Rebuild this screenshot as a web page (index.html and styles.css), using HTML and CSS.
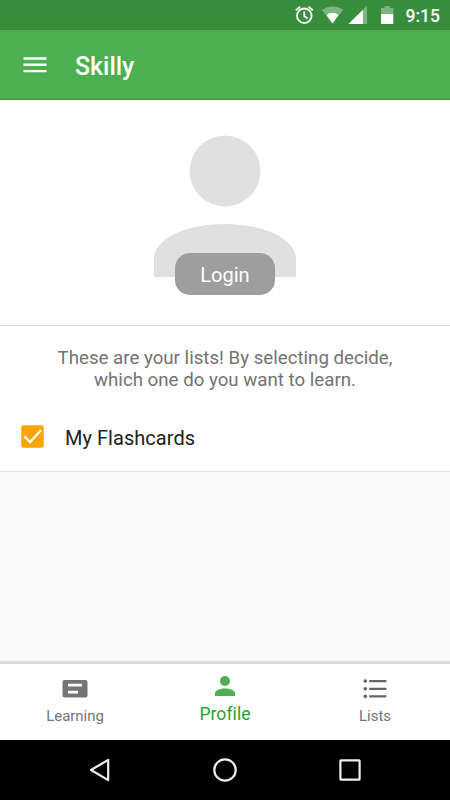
FILE: index.html
```
<!DOCTYPE html>
<html lang="en">
<head>
<meta charset="utf-8">
<title>Skilly</title>
<link rel="stylesheet" href="styles.css">
</head>
<body>
<div class="screen">
  <div class="status">
    <svg class="status-icons" width="120" height="30" viewBox="280 0 120 30" fill="#fff">
      <g fill="none" stroke="#fff" stroke-width="1.8">
        <circle cx="304.3" cy="15.8" r="7.3"/>
        <path d="M295.8 10.3l4.3-3.6M312.8 10.3l-4.3-3.6M304.3 11.3v4.9l3.5 2.2"/>
      </g>
      <path opacity=".35" d="M321.8 9.8Q332.5 2.8 343.2 9.8L332.5 23.6z"/>
      <path d="M326.4 15.1Q332.5 10.4 338.6 15.1L332.5 23.6z"/>
      <path opacity=".35" d="M348.5 24L367 5.7V24z"/>
      <path d="M348.5 24L363 9.7V24z"/>
      <path opacity=".35" d="M381 8h3.5V6h5.5v2h3.3v6H381z"/>
      <path d="M381 14h12.3v10H381z"/>
    </svg>
    <span class="clock">9:15</span>
  </div>
  <header class="appbar">
    <svg width="24" height="18" viewBox="0 0 24 18" fill="#fff"><path d="M.5 1.3h23v2.5H.5zM.5 7.6h23v2.5H.5zM.5 13.9h23v2.4H.5z"/></svg>
    <h1 class="title">Skilly</h1>
  </header>
  <section class="account">
    <svg class="avatar" width="142" height="142" viewBox="0 0 142 142" fill="#e0e0e0">
      <circle cx="71" cy="36" r="35.5"/>
      <path d="M0 142v-18C0 104 32 89 71 89s71 15 71 35v18z"/>
    </svg>
    <button class="login">Login</button>
  </section>
  <section class="lists">
    <p class="message">These are your lists! By selecting decide,<br>which one do you want to learn.</p>
    <div class="row">
      <svg width="23" height="23" viewBox="0 0 23 23"><rect x=".2" y=".2" width="22.6" height="22.6" rx="2" fill="#ffa505"/><path d="M3.3 11.2l5.8 5.8L19.9 5.3" fill="none" stroke="#fff" stroke-width="2.3"/></svg>
      <span class="list-name">My Flashcards</span>
    </div>
  </section>
  <main class="space"></main>
  <nav class="tabs">
    <div class="tab">
      <svg width="26" height="20" viewBox="0 0 26 20"><rect x=".5" y="1" width="25" height="17.6" rx="2" fill="#757575"/><path d="M6 4.8h14v2.7H6zM6 11.8h10v2.7H6z" fill="#fff"/></svg>
      <span class="label">Learning</span>
    </div>
    <div class="tab active">
      <svg width="20" height="20" viewBox="0 0 20 20" fill="#4caf50"><circle cx="10" cy="5" r="5"/><path d="M0 20v-2.5C0 14.2 5 12.5 10 12.5s10 1.7 10 5V20z"/></svg>
      <span class="label">Profile</span>
    </div>
    <div class="tab">
      <svg width="24" height="20" viewBox="0 0 24 20" fill="#666"><circle cx="2.3" cy="2.1" r="1.8"/><circle cx="2.3" cy="9.8" r="1.8"/><circle cx="2.3" cy="17.4" r="1.8"/><path d="M6.2 1h17.2v2.3H6.2zM6.2 8.7h17.2V11H6.2zM6.2 16.2h17.2v2.3H6.2z"/></svg>
      <span class="label">Lists</span>
    </div>
  </nav>
  <footer class="system">
    <svg width="26" height="26" viewBox="0 0 26 26"><path d="M4 13L21.2 2.9v20.2z"/></svg>
    <svg width="26" height="26" viewBox="0 0 26 26"><circle cx="13" cy="13" r="10.7"/></svg>
    <svg width="26" height="26" viewBox="0 0 26 26"><rect x="3.4" y="3.4" width="19.2" height="19.2" rx=".5"/></svg>
  </footer>
</div>
</body>
</html>
```
FILE: styles.css
```
* { box-sizing: border-box; }
body { margin: 0; font-family: Roboto, sans-serif; }
svg { display: block; flex: none; }
.screen { width: 450px; height: 800px; display: flex; flex-direction: column; background: #fafafa; overflow: hidden; }
.status { height: 30px; flex: none; display: flex; align-items: center; padding-left: 280px; background: #388e3c; color: #fff; }
.clock { font-size: 17.5px; font-weight: 500; line-height: 20px; margin: 2px 0 0 5.5px; }
.appbar { height: 70px; flex: none; display: flex; align-items: center; gap: 28px; padding-left: 23px; background: #4caf50; border-bottom: 1px solid #2f9e3b; }
.title { margin: 5px 0 0; font-size: 25px; font-weight: 500; line-height: 30px; letter-spacing: -.05px; color: #fff; }
.account { height: 226px; flex: none; display: flex; flex-direction: column; align-items: center; padding-top: 35px; background: #fff; border-bottom: 1px solid #e0e0e0; }
.login { position: relative; width: 100px; height: 42px; margin-top: -24px; padding: 2px 0 0; border: 0; border-radius: 15px; background: #9e9e9e; color: #fff; font: 20px Roboto, sans-serif; }
.lists { height: 146px; flex: none; padding-top: 21px; background: #fff; border-bottom: 1px solid #e4e4e4; }
.message { margin: 0; font-size: 18.7px; line-height: 22px; text-align: center; color: #737373; }
.row { display: flex; align-items: center; gap: 21px; margin-top: 34px; padding-left: 21px; height: 24px; }
.row svg { margin-top: -1px; }
.list-name { font-size: 20px; line-height: 24px; padding-top: 2px; letter-spacing: .04px; color: #212121; }
.space { flex: 1; }
.tabs { height: 80px; flex: none; display: flex; background: linear-gradient(#f0f0f0 0 1px, #e2e2e2 1px 2px, #d8d8d8 2px 4px, #fff 4px); }
.tab { flex: 1; display: flex; flex-direction: column; align-items: center; padding-top: 19px; gap: 7px; color: #757575; font-size: 15px; line-height: 20px; letter-spacing: -.04px; }
.active { padding-top: 16px; gap: 8px; color: #21a62b; font-size: 17.5px; letter-spacing: .08px; }
.system { height: 60px; flex: none; display: flex; justify-content: space-between; align-items: center; padding: 0 87px; background: #000; fill: none; stroke: #eee; stroke-width: 2.2; stroke-linejoin: round; }
```
